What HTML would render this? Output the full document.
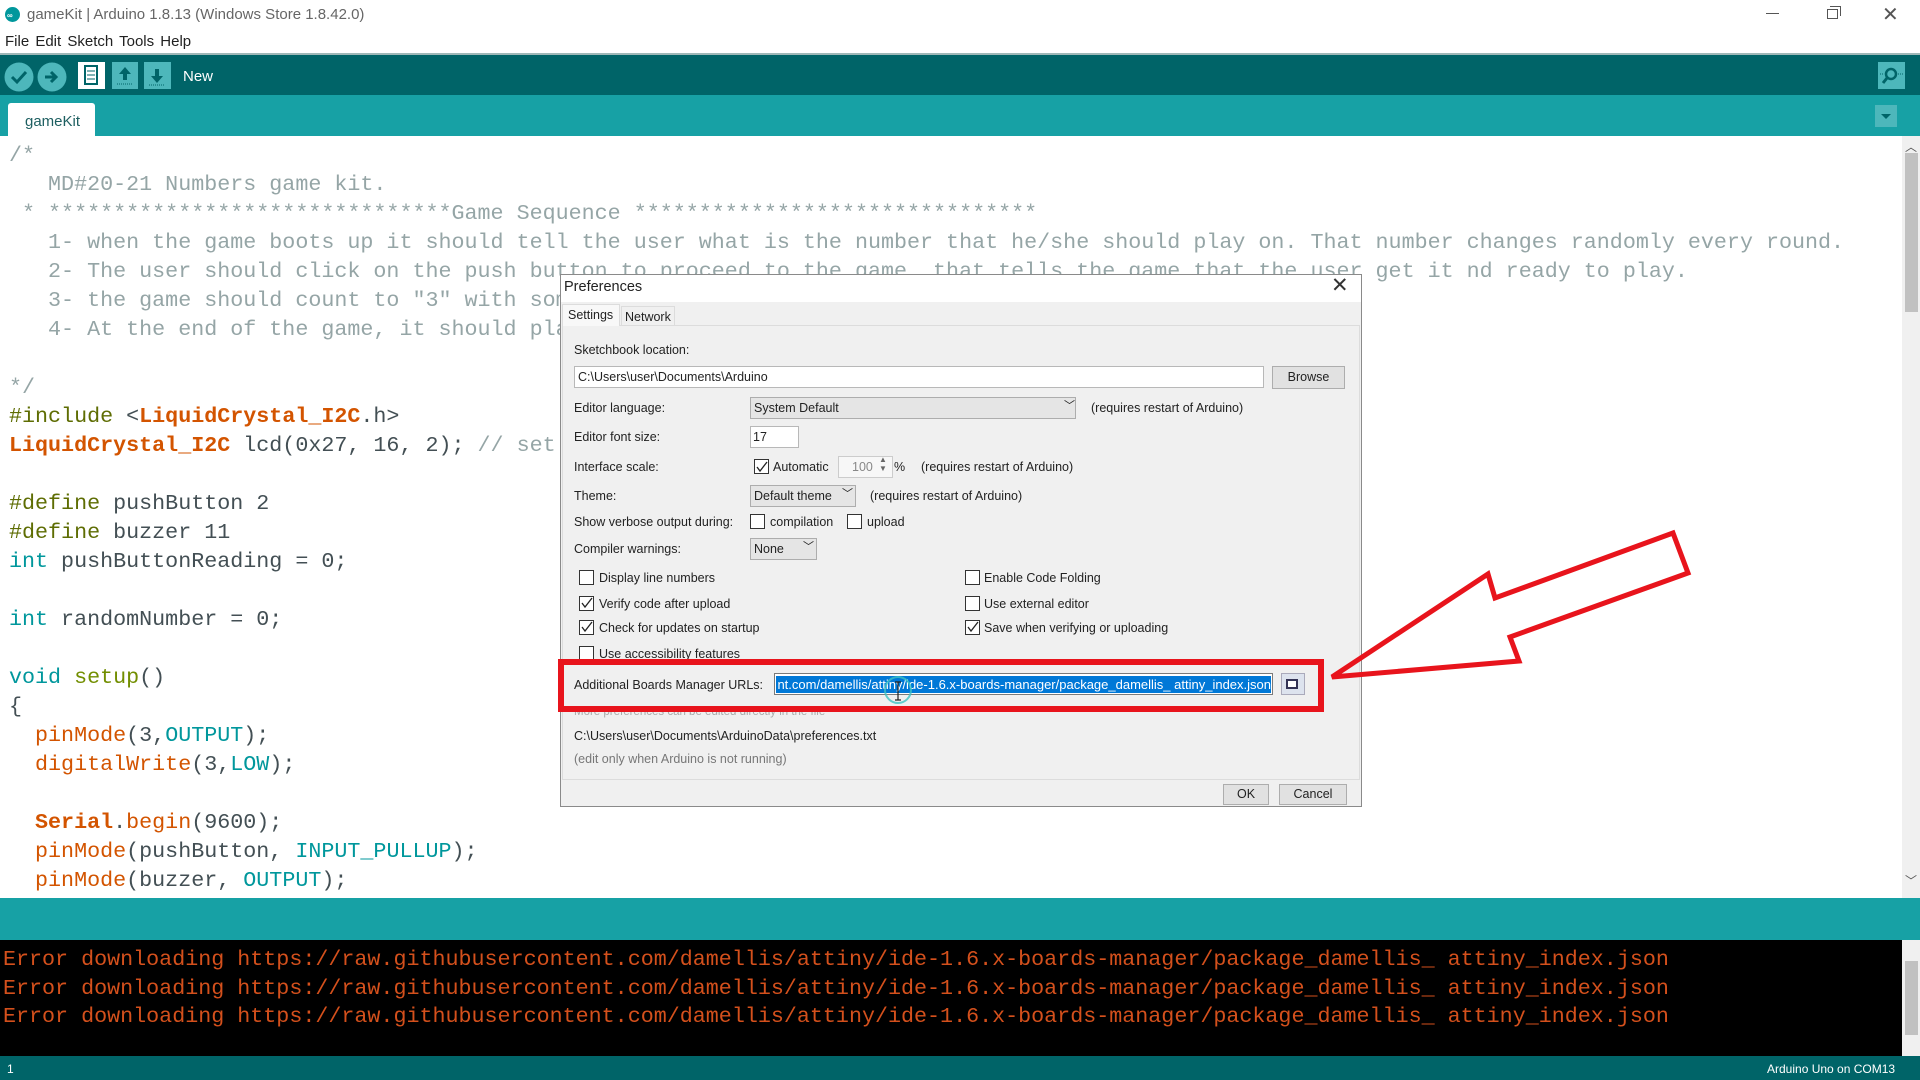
<!DOCTYPE html>
<html><head><meta charset="utf-8"><style>
*{margin:0;padding:0;box-sizing:border-box}
body{width:1920px;height:1080px;overflow:hidden;background:#fff;font-family:"Liberation Sans",sans-serif;position:relative}
.a{position:absolute}
.code{position:absolute;left:9px;top:139px;font-family:"Liberation Mono",monospace;font-size:21.7px;line-height:29px;color:#434f54;white-space:pre}
.c{color:#95a5a6}.o{color:#d35400}.ob{color:#d35400;font-weight:bold}.t{color:#00979c}.g{color:#5e6d03}.p{color:#728e00}
.dl{position:absolute;font-size:12.5px;color:#222;white-space:nowrap;line-height:16px}
.cb{position:absolute;width:15px;height:15px;border:1px solid #333;background:#fff}
.field{position:absolute;background:#fff;border:1px solid #b8b8b8}
.combo{position:absolute;background:#e5e5e5;border:1px solid #adadad}
.btn{position:absolute;background:#e1e1e1;border:1px solid #adadad;font-size:12.5px;text-align:center;color:#222}
</style></head><body>
<!-- title bar -->
<div class="a" style="left:5px;top:7px;width:15px;height:15px;border-radius:50%;background:#00979c"></div>
<div class="a" style="left:7px;top:11px;font-size:8px;color:#fff;font-weight:bold">∞</div>
<div class="a" style="left:27px;top:6px;font-size:15px;color:#666">gameKit | Arduino 1.8.13 (Windows Store 1.8.42.0)</div>
<div class="a" style="left:1766px;top:13px;width:13px;height:1px;background:#555"></div>
<div class="a" style="left:1827px;top:9px;width:11px;height:10px;border:1px solid #555"></div>
<div class="a" style="left:1830px;top:6px;width:11px;height:10px;border-top:1px solid #555;border-right:1px solid #555"></div>
<div class="a" style="left:1882px;top:2px;font-size:20px;color:#555">✕</div>
<div class="a" style="left:5px;top:33px;font-size:15px;color:#222;word-spacing:2px">File Edit Sketch Tools Help</div>
<div class="a" style="left:0;top:53px;width:1920px;height:2px;background:#9fb8b8"></div>
<!-- toolbar -->
<div class="a" style="left:0;top:55px;width:1920px;height:40px;background:#006468"></div>
<svg class="a" style="left:0;top:55px" width="220" height="40">
<circle cx="19" cy="22" r="14.5" fill="#4db7bb"/><polyline points="12,22 17,27 26,17" fill="none" stroke="#006468" stroke-width="3"/>
<circle cx="52" cy="22" r="14.5" fill="#4db7bb"/><path d="M45 22h10M51 17l5 5-5 5" fill="none" stroke="#006468" stroke-width="3"/>
<rect x="78" y="7" width="27" height="27" fill="#fff"/><rect x="85" y="11" width="12" height="18" fill="none" stroke="#006468" stroke-width="2"/><path d="M87 16h8M87 20h8M87 24h8" stroke="#006468"/>
<rect x="112" y="7" width="26" height="27" fill="#4db7bb"/><path d="M125 12l-6 7h4v6h4v-6h4z" fill="#006468"/><path d="M117 29h16" stroke="#006468" stroke-dasharray="1 1"/>
<rect x="144" y="7" width="27" height="27" fill="#4db7bb"/><path d="M157 28l-6-7h4v-7h4v7h4z" fill="#006468"/><path d="M149 30h16" stroke="#006468" stroke-dasharray="1 1"/>
</svg>
<div class="a" style="left:183px;top:68px;font-size:15px;color:#fff">New</div>
<svg class="a" style="left:1878px;top:62px" width="27" height="27"><rect width="27" height="27" fill="#4db7bb"/><circle cx="13" cy="12" r="5" fill="none" stroke="#006468" stroke-width="2.5"/><path d="M9 16l-4 5" stroke="#006468" stroke-width="3"/><path d="M20 12h5M2 12h4" stroke="#006468" stroke-dasharray="1 1"/></svg>
<!-- tab bar -->
<div class="a" style="left:0;top:95px;width:1920px;height:41px;background:#17a1a5"></div>
<div class="a" style="left:8px;top:103px;width:87px;height:33px;background:#fff;border-radius:3px 3px 0 0"></div>
<div class="a" style="left:25px;top:113px;font-size:15px;color:#1e5f61">gameKit</div>
<svg class="a" style="left:1875px;top:105px" width="22" height="22"><rect width="22" height="22" fill="#4db7bb"/><path d="M6 9h10l-5 5z" fill="#006468"/></svg>
<!-- editor -->
<div class="a" style="left:0;top:136px;width:1902px;height:762px;overflow:hidden">
<div class="code" style="top:5px"><span class="c">/*
   MD#20-21 Numbers game kit.
 * *******************************Game Sequence *******************************
   1- when the game boots up it should tell the user what is the number that he/she should play on. That number changes randomly every round.
   2- The user should click on the push button to proceed to the game, that tells the game that the user get it nd ready to play.
   3- the game should count to "3" with some sound
   4- At the end of the game, it should play

*/</span>
<span class="g">#include</span> &lt;<span class="ob">LiquidCrystal_I2C</span>.h&gt;
<span class="ob">LiquidCrystal_I2C</span> lcd(0x27, 16, 2); <span class="c">// set</span>

<span class="g">#define</span> pushButton 2
<span class="g">#define</span> buzzer 11
<span class="t">int</span> pushButtonReading = 0;

<span class="t">int</span> randomNumber = 0;

<span class="t">void</span> <span class="p">setup</span>()
{
  <span class="o">pinMode</span>(3,<span class="t">OUTPUT</span>);
  <span class="o">digitalWrite</span>(3,<span class="t">LOW</span>);

  <span class="ob">Serial</span>.<span class="o">begin</span>(9600);
  <span class="o">pinMode</span>(pushButton, <span class="t">INPUT_PULLUP</span>);
  <span class="o">pinMode</span>(buzzer, <span class="t">OUTPUT</span>);</div></div>
<div class="a" style="left:1902px;top:136px;width:18px;height:762px;background:#f0f0f0"></div>
<div class="a" style="left:1905px;top:153px;width:13px;height:159px;background:#c1c1c1"></div>
<div class="a" style="left:1905px;top:138px;font-size:12px;color:#555">︿</div>
<div class="a" style="left:1905px;top:872px;font-size:12px;color:#555">﹀</div>
<!-- status -->
<div class="a" style="left:0;top:898px;width:1920px;height:42px;background:#17a1a5"></div>
<div class="a" style="left:0;top:940px;width:1920px;height:116px;background:#000"></div>
<div class="a" style="left:3px;top:946px;font-family:'Liberation Mono',monospace;font-size:21.7px;line-height:28.7px;color:#d4501c;white-space:pre">Error downloading https://raw.githubusercontent.com/damellis/attiny/ide-1.6.x-boards-manager/package_damellis_ attiny_index.json
Error downloading https://raw.githubusercontent.com/damellis/attiny/ide-1.6.x-boards-manager/package_damellis_ attiny_index.json
Error downloading https://raw.githubusercontent.com/damellis/attiny/ide-1.6.x-boards-manager/package_damellis_ attiny_index.json</div>
<div class="a" style="left:1902px;top:940px;width:18px;height:116px;background:#f0f0f0"></div>
<div class="a" style="left:1905px;top:961px;width:13px;height:74px;background:#c1c1c1"></div>
<div class="a" style="left:0;top:1056px;width:1920px;height:24px;background:#006468"></div>
<div class="a" style="left:7px;top:1062px;font-size:12px;color:#fff">1</div>
<div class="a" style="left:1767px;top:1062px;font-size:12px;color:#fff">Arduino Uno on COM13</div>
<!-- dialog -->
<div class="a" style="left:560px;top:274px;width:802px;height:533px;background:#f0f0f0;border:1px solid #8a8a8a"></div>
<div class="a" style="left:561px;top:275px;width:800px;height:27px;background:#fff"></div>
<div class="a" style="left:564px;top:279px;font-size:14.5px;color:#222">Preferences</div>
<div class="a" style="left:1331px;top:273px;font-size:21px;color:#333">✕</div>
<div class="a" style="left:562px;top:325px;width:798px;height:455px;background:#f0f0f0;border:1px solid #dcdcdc"></div>
<div class="a" style="left:562px;top:304px;width:58px;height:22px;background:#f8f8f8;border:1px solid #dcdcdc;border-bottom:none"></div>
<div class="a" style="left:621px;top:306px;width:54px;height:20px;background:#f0f0f0;border:1px solid #dcdcdc"></div>
<div class="dl" style="left:568px;top:307px">Settings</div>
<div class="dl" style="left:625px;top:309px">Network</div>
<div class="dl" style="left:574px;top:342px">Sketchbook location:</div>
<div class="field" style="left:574px;top:366px;width:690px;height:22px"></div>
<div class="dl" style="left:578px;top:369px">C:\Users\user\Documents\Arduino</div>
<div class="btn" style="left:1272px;top:366px;width:73px;height:23px;line-height:21px">Browse</div>
<div class="dl" style="left:574px;top:400px">Editor language:</div>
<div class="combo" style="left:750px;top:397px;width:326px;height:22px"></div>
<div class="dl" style="left:754px;top:400px">System Default</div>
<div class="dl" style="left:1064px;top:398px;font-size:11px">﹀</div>
<div class="dl" style="left:1091px;top:400px">(requires restart of Arduino)</div>
<div class="dl" style="left:574px;top:429px">Editor font size:</div>
<div class="field" style="left:750px;top:426px;width:49px;height:22px"></div>
<div class="dl" style="left:753px;top:429px">17</div>
<div class="dl" style="left:574px;top:459px">Interface scale:</div>
<div class="cb" style="left:754px;top:459px"></div>
<svg class="a" style="left:755px;top:460px" width="14" height="14"><polyline points="2,7 5,11 12,2" fill="none" stroke="#222" stroke-width="1.3"/></svg>
<div class="dl" style="left:773px;top:459px">Automatic</div>
<div class="field" style="left:838px;top:456px;width:55px;height:22px;background:#f7f7f7;border-color:#ccc"></div>
<div class="dl" style="left:852px;top:459px;color:#888">100</div>
<div class="dl" style="left:879px;top:455px;font-size:8px;color:#666;line-height:9px">▲<br>▼</div>
<div class="dl" style="left:894px;top:459px">%</div>
<div class="dl" style="left:921px;top:459px">(requires restart of Arduino)</div>
<div class="dl" style="left:574px;top:488px">Theme:</div>
<div class="combo" style="left:750px;top:485px;width:106px;height:22px"></div>
<div class="dl" style="left:754px;top:488px">Default theme</div>
<div class="dl" style="left:842px;top:486px;font-size:11px">﹀</div>
<div class="dl" style="left:870px;top:488px">(requires restart of Arduino)</div>
<div class="dl" style="left:574px;top:514px">Show verbose output during:</div>
<div class="cb" style="left:750px;top:514px"></div>
<div class="dl" style="left:770px;top:514px">compilation</div>
<div class="cb" style="left:847px;top:514px"></div>
<div class="dl" style="left:867px;top:514px">upload</div>
<div class="dl" style="left:574px;top:541px">Compiler warnings:</div>
<div class="combo" style="left:750px;top:538px;width:67px;height:22px"></div>
<div class="dl" style="left:754px;top:541px">None</div>
<div class="dl" style="left:803px;top:539px;font-size:11px">﹀</div>
<div class="cb" style="left:579px;top:570px"></div><div class="dl" style="left:599px;top:570px">Display line numbers</div>
<div class="cb" style="left:579px;top:596px"></div><div class="dl" style="left:599px;top:596px">Verify code after upload</div>
<div class="cb" style="left:579px;top:620px"></div><div class="dl" style="left:599px;top:620px">Check for updates on startup</div>
<div class="cb" style="left:579px;top:646px"></div><div class="dl" style="left:599px;top:646px">Use accessibility features</div>
<div class="cb" style="left:965px;top:570px"></div><div class="dl" style="left:984px;top:570px">Enable Code Folding</div>
<div class="cb" style="left:965px;top:596px"></div><div class="dl" style="left:984px;top:596px">Use external editor</div>
<div class="cb" style="left:965px;top:620px"></div><div class="dl" style="left:984px;top:620px">Save when verifying or uploading</div>
<svg class="a" style="left:0;top:0" width="1920" height="1080">
<g fill="none" stroke="#222" stroke-width="1.3">
<polyline points="582,603 585,607 592,598"/><polyline points="582,627 585,631 592,622"/><polyline points="968,627 971,631 978,622"/>
</g></svg>
<div class="dl" style="left:574px;top:677px">Additional Boards Manager URLs:</div>
<div class="field" style="left:774px;top:673px;width:499px;height:22px;border-color:#7a7a7a"></div>
<div class="a" style="left:776px;top:676px;width:495px;height:17px;overflow:hidden;display:flex;justify-content:flex-end;background:#0078d7">
<div style="color:#fff;font-size:13px;line-height:17px;white-space:nowrap;flex-shrink:0">nt.com/damellis/attiny/ide-1.6.x-boards-manager/package_damellis_ attiny_index.json</div></div>
<div class="a" style="left:1281px;top:673px;width:24px;height:22px;background:#dde3ee;border:1px solid #aab"></div>
<div class="a" style="left:1286px;top:679px;width:12px;height:10px;border:2px solid #335;background:#fff"></div>
<div class="dl" style="left:574px;top:704px;color:#aaa;font-size:11.5px">More preferences can be edited directly in the file</div>
<div class="dl" style="left:574px;top:728px">C:\Users\user\Documents\ArduinoData\preferences.txt</div>
<div class="dl" style="left:574px;top:751px;color:#777">(edit only when Arduino is not running)</div>
<div class="btn" style="left:1223px;top:784px;width:46px;height:21px;line-height:19px">OK</div>
<div class="btn" style="left:1279px;top:784px;width:68px;height:21px;line-height:19px">Cancel</div>
<!-- annotations -->
<svg class="a" style="left:0;top:0" width="1920" height="1080">
<circle cx="898" cy="690" r="13" fill="none" stroke="#3ec3c3" stroke-width="2" opacity="0.8"/>
<path d="M898 682v18M895 682h6M895 700h6" stroke="#222" stroke-width="1.2"/>
<rect x="561" y="662" width="760" height="47" fill="none" stroke="#e8141c" stroke-width="6"/>
<polygon points="1332,677 1488,574 1495,598 1673,533 1688,573 1510,637 1519,661" fill="none" stroke="#e8141c" stroke-width="5" stroke-linejoin="miter"/>
</svg>
</body></html>
